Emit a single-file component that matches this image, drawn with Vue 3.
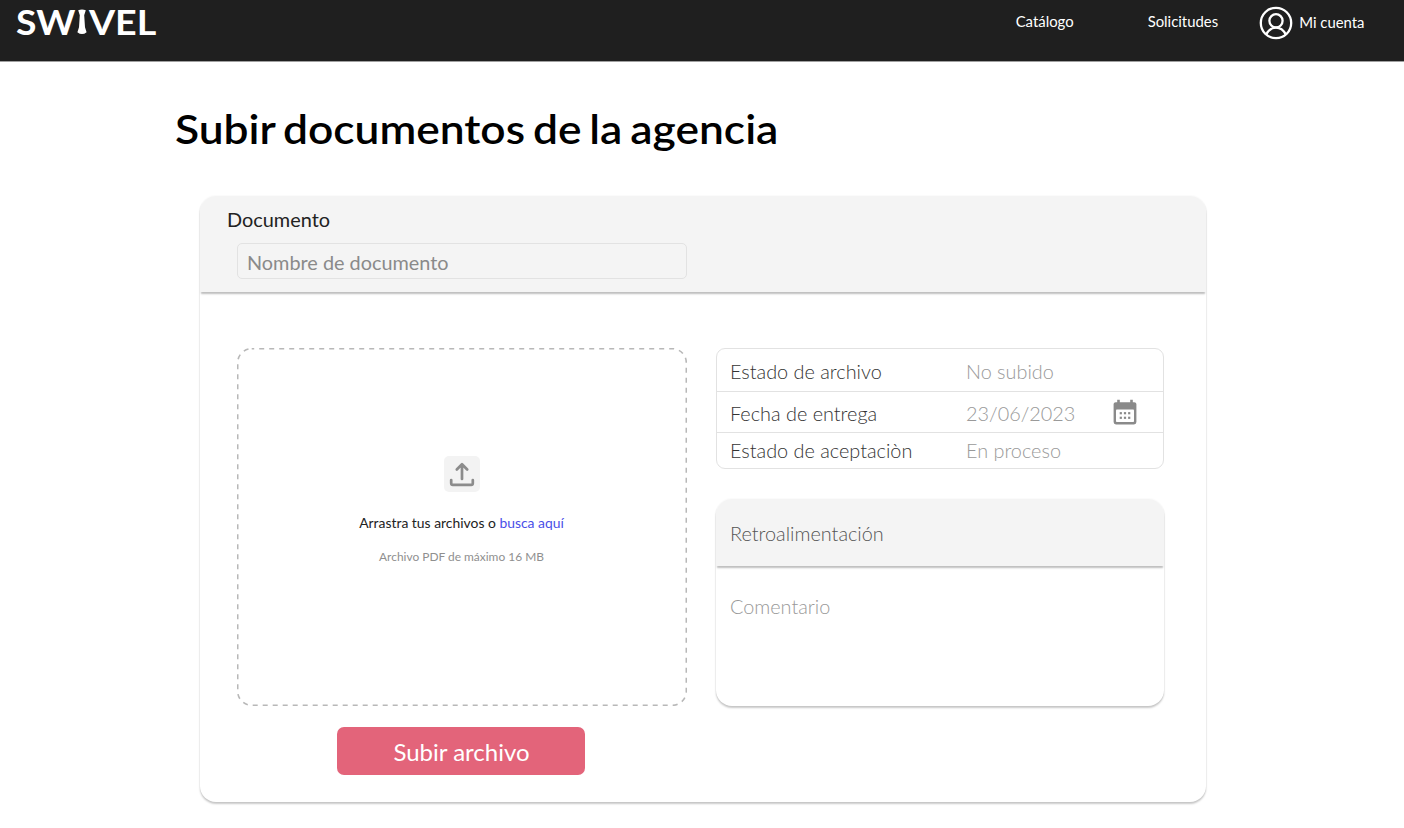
<script setup>
const rows = [
  { label: 'Estado de archivo', value: 'No subido', kind: 'file' },
  { label: 'Fecha de entrega', value: '23/06/2023', kind: 'date' },
  { label: 'Estado de aceptaciòn', value: 'En proceso', kind: 'accept' },
]
const dots = [7.8, 12, 16.2].flatMap((x) => [14.2, 18.8].map((y) => ({ x, y })))
</script>

<template>
  <div class="page">
    <header class="topbar">
      <div class="logo" aria-label="SWIVEL">
        <span class="logo-sw">SW</span>
        <svg class="logo-tie" width="10" height="26" viewBox="0 0 10 26">
          <path d="M1.2 1.2Q5 0 8.8 1.2L7.2 6.2 8 18.2 9.6 23.2Q5 27 .4 23.2L2 18.2 2.8 6.2Z" fill="#fff" />
        </svg>
        <span class="logo-vel">VEL</span>
      </div>
      <nav class="nav">
        <a class="catalog">Catálogo</a>
        <a class="requests">Solicitudes</a>
        <a class="account">
          <svg width="34" height="34" viewBox="0 0 34 34" fill="none" stroke="#fff" stroke-width="2.3">
            <circle cx="17" cy="17" r="15.2" />
            <circle cx="17" cy="14.8" r="6.6" />
            <path d="M7.2 28.4C9.5 24 13 21.6 17 21.6S24.5 24 26.8 28.4" />
          </svg>
          <span>Mi cuenta</span>
        </a>
      </nav>
    </header>

    <main>
      <h1><span>Subir documentos de la agencia</span></h1>
      <section class="card">
        <div class="card-head">
          <label>Documento</label>
          <div class="field"><span>Nombre de documento</span></div>
        </div>
        <div class="card-body">
          <div class="left">
            <div class="dropzone">
              <svg class="dash" width="450" height="358" viewBox="0 0 450 358">
                <rect x=".7" y=".7" width="448.6" height="356.6" rx="14" fill="none" stroke="#b8b8b8" stroke-width="1.6" stroke-dasharray="5 5" stroke-dashoffset="2.5" />
              </svg>
              <div class="drop-content">
                <div class="upload-icon">
                  <svg width="36" height="36" viewBox="0 0 36 36" fill="none" stroke="#8c8c8c" stroke-width="2.7" stroke-linecap="round" stroke-linejoin="round">
                    <path d="M18 23V8.5M12.8 13.5L18 8.2L23.2 13.5" />
                    <path d="M7.2 24V27.2Q7.2 28.8 8.8 28.8H27.2Q28.8 28.8 28.8 27.2V24" />
                  </svg>
                </div>
                <p class="drag"><span>Arrastra tus archivos o <a>busca aquí</a></span></p>
                <p class="hint"><span>Archivo PDF de máximo 16 MB</span></p>
              </div>
            </div>
            <button><span>Subir archivo</span></button>
          </div>
          <div class="right">
            <div class="status">
              <div v-for="r in rows" :key="r.kind" class="row" :class="r.kind">
                <div class="label"><span>{{ r.label }}</span></div>
                <div class="value"><span>{{ r.value }}</span></div>
                <svg v-if="r.kind === 'date'" width="24" height="26" viewBox="0 0 24 26">
                  <path d="M4.2 .8h2.6v2.4h10.4v-2.4h2.6v2.4h1.4Q23.4 3.2 23.4 5V23Q23.4 25.4 21 25.4H3Q.6 25.4 .6 23V5Q.6 3.2 2.8 3.2H4.2Z" fill="#8a8a8a" />
                  <rect x="3" y="10.6" width="18" height="12.4" rx=".8" fill="#fff" />
                  <rect v-for="(d, i) in dots" :key="i" :x="d.x - 1.1" :y="d.y - 1.1" width="2.2" height="2.2" fill="#8a8a8a" />
                </svg>
              </div>
            </div>
            <div class="feedback">
              <div class="feedback-head"><span>Retroalimentación</span></div>
              <div class="feedback-body"><span>Comentario</span></div>
            </div>
          </div>
        </div>
      </section>
    </main>
  </div>
</template>

<style>
body { background: #fff; }
</style>

<style scoped>
* { box-sizing: border-box; }
.page { width: 1404px; height: 828px; overflow: hidden; font-family: Lato, "Liberation Sans", sans-serif; color: #222; }
span { white-space: nowrap; }
.topbar { height: 62px; background: #1f1f1f; border-bottom: 1px solid #a0a0a0; display: flex; justify-content: space-between; align-items: flex-start; color: #fff; }
.logo { display: flex; align-items: center; height: 44px; padding-left: 16px; font-size: 34.5px; font-weight: 700; line-height: 44px; }
.logo span { display: inline-block; transform-origin: 0 50%; }
.logo-sw { width: 61px; transform: scaleX(1.08); }
.logo-tie { margin-right: 2px; }
.logo-vel { transform: scaleX(1.09); }
.nav { display: flex; height: 42px; align-items: center; font-size: 14.9px; line-height: 20px; padding-right: 39.5px; }
.requests { margin-left: 74px; }
.account { margin-left: 40.5px; display: flex; align-items: center; gap: 6.5px; padding-top: 3px; }
.account span { padding-bottom: 2px; }
h1 { margin: 0; padding: 43px 0 0 175px; height: 134px; font-size: 40px; line-height: 48px; font-weight: 600; color: #000; }
h1 span { display: inline-block; word-spacing: -2.8px; transform: scaleX(1.108); transform-origin: 0 50%; }
.card { margin-left: 200px; width: 1006px; height: 606px; border-radius: 16px; background: #fff; box-shadow: 0 2px 2px rgba(0,0,0,.21), 0 0 2px rgba(0,0,0,.07); }
.card-head { height: 96px; background: #f4f4f4; border-radius: 16px 16px 0 0; box-shadow: 0 3px 2px -1px rgba(0,0,0,.26); padding: 11px 0 0 27px; }
.card-head label { display: block; font-size: 19.9px; line-height: 24px; height: 36px; }
.field { margin-left: 10px; width: 450px; height: 36px; border: 1px solid #e2e2e2; border-radius: 5px; padding-left: 9px; font-size: 19.85px; line-height: 37px; color: #8a8a8a; }
.card-body { display: flex; gap: 29px; padding: 56px 0 0 37px; }
.left { width: 450px; display: flex; flex-direction: column; align-items: center; }
.dropzone { display: grid; width: 450px; height: 358px; }
.dropzone > * { grid-area: 1 / 1; }
.drop-content { display: flex; flex-direction: column; align-items: center; padding: 108px 1px 0 0; }
.upload-icon { width: 36px; height: 36px; border-radius: 5px; background: #f3f3f3; }
p { margin: 0; }
.drag { margin-top: 21px; font-size: 13.9px; line-height: 20px; }
.drag a { color: #4a4fe8; }
.hint { margin-top: 14px; font-size: 11.95px; line-height: 20px; color: #8f8f8f; }
button { margin: 21px 2px 0 0; width: 248px; height: 48px; border: 0; border-radius: 7px; background: #e3647a; color: #fff; font: 400 24px/48px Lato, sans-serif; padding: 1px 0 0 1px; }
.right { width: 448px; }
.status { height: 121px; border: 1px solid #e2e2e2; border-radius: 9px; font-size: 19.85px; font-weight: 300; }
.row { display: flex; align-items: center; padding-left: 13px; }
.row + .row { border-top: 1px solid #e2e2e2; }
.file { height: 42px; padding-top: 2px; }
.date { height: 41px; padding-top: 2px; }
.accept { height: 37px; padding-bottom: 3px; }
.label { width: 236px; color: #333; }
.value { width: 147px; color: #999; }
.date svg { margin-top: -2px; }
.feedback { margin-top: 30px; height: 207px; border-radius: 16px; box-shadow: 0 2px 2px rgba(0,0,0,.21), 0 0 2px rgba(0,0,0,.07); font-size: 19.85px; font-weight: 300; }
.feedback-head { height: 67px; border-radius: 16px 16px 0 0; background: #f4f4f4; box-shadow: 0 3px 2px -1px rgba(0,0,0,.26); padding-left: 14px; line-height: 69px; color: #555; }
.feedback-body { padding: 27px 0 0 14px; line-height: 26px; color: #999; }
</style>
